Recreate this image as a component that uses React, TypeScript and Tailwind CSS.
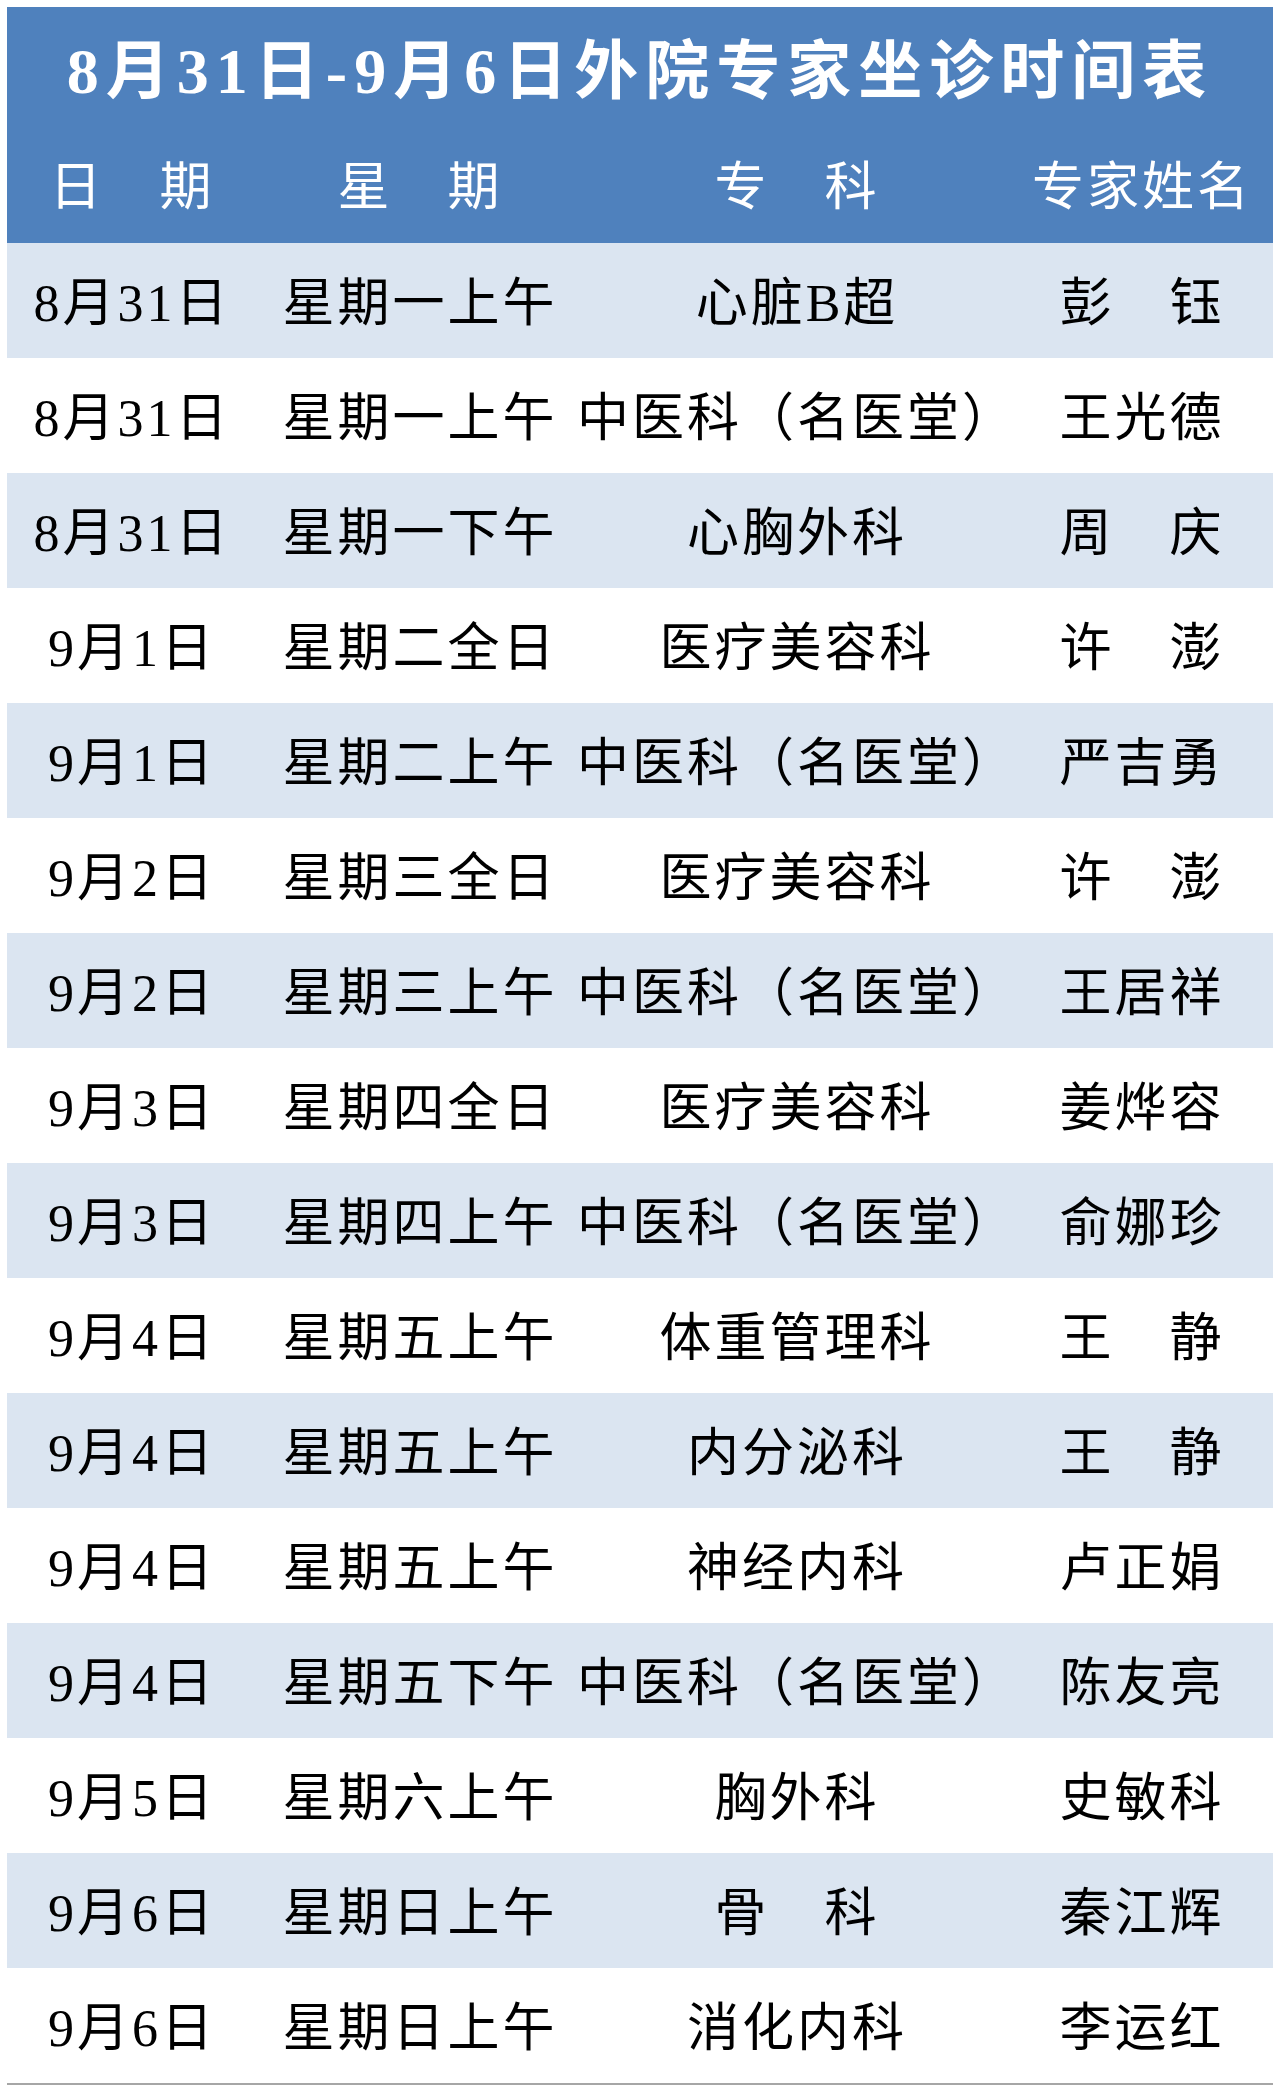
const rows: [string, string, string, string][] = [
  ['8月31日', '星期一上午', '心脏B超', '彭\u3000钰'],
  ['8月31日', '星期一上午', '中医科（名医堂）', '王光德'],
  ['8月31日', '星期一下午', '心胸外科', '周\u3000庆'],
  ['9月1日', '星期二全日', '医疗美容科', '许\u3000澎'],
  ['9月1日', '星期二上午', '中医科（名医堂）', '严吉勇'],
  ['9月2日', '星期三全日', '医疗美容科', '许\u3000澎'],
  ['9月2日', '星期三上午', '中医科（名医堂）', '王居祥'],
  ['9月3日', '星期四全日', '医疗美容科', '姜烨容'],
  ['9月3日', '星期四上午', '中医科（名医堂）', '俞娜珍'],
  ['9月4日', '星期五上午', '体重管理科', '王\u3000静'],
  ['9月4日', '星期五上午', '内分泌科', '王\u3000静'],
  ['9月4日', '星期五上午', '神经内科', '卢正娟'],
  ['9月4日', '星期五下午', '中医科（名医堂）', '陈友亮'],
  ['9月5日', '星期六上午', '胸外科', '史敏科'],
  ['9月6日', '星期日上午', '骨\u3000科', '秦江辉'],
  ['9月6日', '星期日上午', '消化内科', '李运红'],
];

const cols = 'grid grid-cols-[250px_326px_428px_262px]';
const cell = 'flex items-center justify-center whitespace-nowrap';

export default function App() {
  return (
    <div className="min-h-screen bg-white pt-[7px] px-[7px] font-['Liberation_Serif','Noto_Sans_CJK_SC',serif]">
      <div className="w-[1266px]">
        {/* Header */}
        <div className="bg-[#4f81bd] text-white">
          <div className="h-[126px] flex items-center justify-center text-[64px] font-bold tracking-[7px] leading-none pt-[4px]">
            8月31日-9月6日外院专家坐诊时间表
          </div>
          <div className={`${cols} h-[110px] text-[52px] tracking-[3px] leading-none`}>
            <div className={cell}>日{'\u3000'}期</div>
            <div className={cell}>星{'\u3000'}期</div>
            <div className={cell}>专{'\u3000'}科</div>
            <div className={cell}>专家姓名</div>
          </div>
        </div>

        {/* Rows */}
        {rows.map((r, i) => (
          <div
            key={i}
            className={`${cols} h-[115px] pt-[6px] text-[52px] tracking-[3px] leading-none text-black ${i % 2 === 0 ? 'bg-[#dbe5f1]' : 'bg-white'}`}
          >
            {r.map((t, j) => (
              <div key={j} className={cell}>{t}</div>
            ))}
          </div>
        ))}
        <div className="h-[2px] bg-[#a6a6a6]" />
      </div>
    </div>
  );
}
